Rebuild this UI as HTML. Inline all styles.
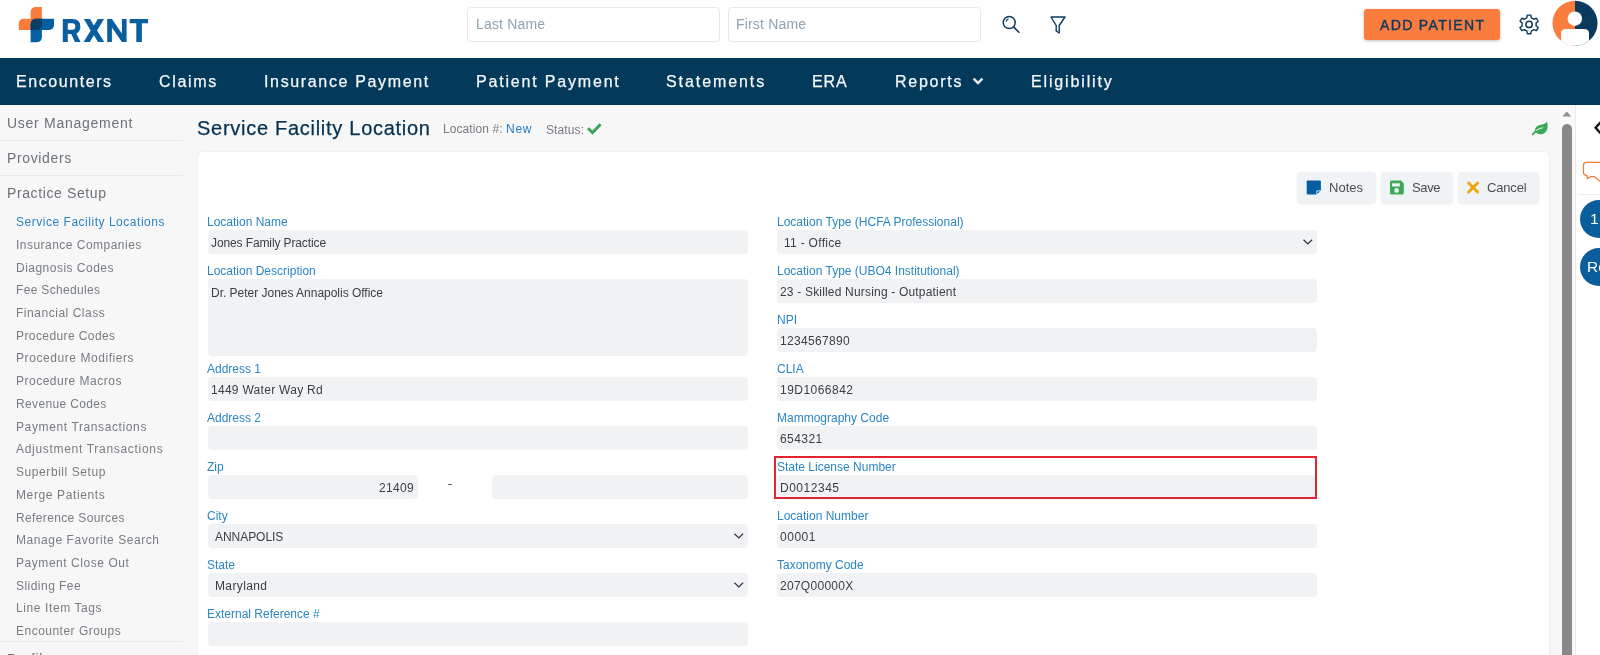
<!DOCTYPE html>
<html><head><meta charset="utf-8">
<style>
*{box-sizing:border-box;margin:0;padding:0}
html,body{width:1600px;height:655px;overflow:hidden;background:#fff;font-family:"Liberation Sans",sans-serif}
.a{position:absolute}
.t{position:absolute;white-space:nowrap;line-height:1;font-family:"Liberation Sans",sans-serif;will-change:transform}
.inp{position:absolute;background:#f1f2f4;border-radius:4px}
.chev{position:absolute}
.dash{position:absolute;width:4px;height:1px;background:#666}
.btn{position:absolute;top:172px;height:31px;background:#f0f3f5;border-radius:4px;box-shadow:0 1px 2px rgba(0,0,0,0.08)}
</style></head><body>
<!-- header -->
<div class="a" style="left:0;top:0;width:1600px;height:58px;background:#fff"></div>
<svg class="a" style="left:0;top:0" width="60" height="50" viewBox="0 0 60 50">
  <path d="M30.6 24 V12.6 Q30.6 7.1 36.1 7.1 H41.9 V24 Z" fill="#fa7b3c"/>
  <path d="M18.75 30 V24.2 Q18.75 18.75 24.2 18.75 H36 V30 Z" fill="#fa7b3c"/>
  <path d="M36 18.75 H54 V24.6 Q54 30 48.6 30 H36 Z" fill="#035f9f"/>
  <path d="M30.6 24 H41.9 V36.8 Q41.9 42.25 36.5 42.25 H30.6 Z" fill="#035f9f"/>
  <path d="M30.6 24.2 Q30.6 18.75 36.1 18.75 H41.9 V24.6 Q41.9 30 36.5 30 H30.6 Z" fill="#0a3e64"/>
</svg>
<svg class="a" style="left:60px;top:16px" width="92" height="30" viewBox="60 16 92 30">
  <g fill="#0a5f9f">
  <path fill-rule="evenodd" d="M62.8 42 V18.9 H72.6 Q80.4 18.9 80.4 26.4 Q80.4 31.6 76.3 33.4 L80.6 42 H74.9 L71.3 34.1 H67.8 V42 Z M67.8 23.3 V29.8 H72.3 Q75.3 29.8 75.3 26.55 Q75.3 23.3 72.3 23.3 Z"/>
  <path d="M83.8 18.9 H90 L93.9 25.4 L97.8 18.9 H104 L97.1 30.4 L104.2 42 H98 L93.9 35.3 L89.8 42 H83.6 L90.7 30.4 Z"/>
  <path d="M107.2 42 V18.9 H112 L121.9 33.4 V18.9 H126.6 V42 H121.9 L111.9 27.5 V42 Z"/>
  <path d="M129.7 18.9 H148.1 V23.3 H141.9 V42 H136.3 V23.3 H129.7 Z"/>
  </g>
</svg>
<div class="a" style="left:466.5px;top:7.3px;width:253px;height:34.5px;border:1px solid #e6e8ea;border-radius:4px"></div>
<div class="a" style="left:727.5px;top:7.3px;width:253px;height:34.5px;border:1px solid #e6e8ea;border-radius:4px"></div>
<svg class="a" style="left:996px;top:12px" width="30" height="26" viewBox="996 12 30 26">
  <circle cx="1009.2" cy="22.5" r="6" fill="none" stroke="#0d3a5e" stroke-width="1.5"/>
  <path d="M1013.6 26.9 L1018.9 32.2" stroke="#0d3a5e" stroke-width="1.6" stroke-linecap="round"/>
  <path d="M1006.1 21.2 Q1006.7 19.8 1008.1 19.0" stroke="#0d3a5e" stroke-width="1.2" fill="none" stroke-linecap="round"/>
</svg>
<svg class="a" style="left:1046px;top:12px" width="24" height="26" viewBox="1046 12 24 26">
  <path d="M1051 17 H1065 L1059.2 25.5 V33 L1056.2 31 V25.5 Z" fill="none" stroke="#0d3a5e" stroke-width="1.4" stroke-linejoin="round"/>
</svg>
<div class="a" style="left:1364.4px;top:9.4px;width:135.6px;height:30.4px;background:#fb7d3d;border-radius:3px;box-shadow:0 1px 3px rgba(0,0,0,0.25)"></div>
<svg class="a" style="left:1517px;top:12px" width="24" height="25" viewBox="0 0 24 25">
  <g transform="translate(12.1 12.4) scale(1.08)">
    <path d="M-1.6 -9.2 H1.6 L2.1 -6.6 Q3.3 -6.2 4.3 -5.4 L6.8 -6.3 L8.4 -3.5 L6.4 -1.8 Q6.6 -0.6 6.4 0.6 L8.4 2.3 L6.8 5.1 L4.3 4.2 Q3.3 5.0 2.1 5.4 L1.6 8.0 H-1.6 L-2.1 5.4 Q-3.3 5.0 -4.3 4.2 L-6.8 5.1 L-8.4 2.3 L-6.4 0.6 Q-6.6 -0.6 -6.4 -1.8 L-8.4 -3.5 L-6.8 -6.3 L-4.3 -5.4 Q-3.3 -6.2 -2.1 -6.6 Z" transform="translate(0 0.6)" fill="none" stroke="#0d3a5e" stroke-width="1.3" stroke-linejoin="round"/>
    <circle cx="0" cy="0" r="2.9" fill="none" stroke="#0d3a5e" stroke-width="1.4"/>
  </g>
</svg>
<svg class="a" style="left:1550px;top:0" width="50" height="50" viewBox="1550 0 50 50">
  <defs><clipPath id="av"><circle cx="1575" cy="23.2" r="22.5"/></clipPath></defs>
  <g clip-path="url(#av)">
    <rect x="1550" y="0" width="25" height="50" fill="#fb7d3d"/>
    <rect x="1575" y="0" width="25" height="50" fill="#0a3a5e"/>
    <circle cx="1574.8" cy="18.7" r="7.2" fill="#fff"/>
    <path d="M1561 50 V33.5 Q1561 29 1566 29 H1584 Q1589 29 1589 33.5 V50 Z" fill="#fff"/>
  </g>
</svg>
<!-- nav -->
<div class="a" style="left:0;top:58px;width:1600px;height:46.6px;background:#033a5b"></div>
<svg class="a" style="left:970px;top:74px" width="16" height="14" viewBox="970 74 16 14">
  <path d="M973.6 78.6 L978 83 L982.4 78.6" fill="none" stroke="#f5f7f9" stroke-width="2.3"/>
</svg>
<!-- sidebar -->
<div class="a" style="left:0;top:104.6px;width:197px;height:551px;background:#f7f7f7"></div>
<div class="a" style="left:0;top:140px;width:183px;height:1px;background:#e8e9ea"></div>
<div class="a" style="left:0;top:175px;width:183px;height:1px;background:#e8e9ea"></div>
<div class="a" style="left:0;top:641px;width:183px;height:1px;background:#e8e9ea"></div>
<!-- main -->
<div class="a" style="left:186px;top:104.6px;width:1390px;height:551px;background:#f7f7f7"></div>
<svg class="a" style="left:580px;top:120px" width="24" height="18" viewBox="580 120 24 18">
  <path d="M588 128.3 L592.5 132.6 L600.6 124.3" fill="none" stroke="#3aa655" stroke-width="2.9"/>
</svg>
<svg class="a" style="left:1530px;top:119px" width="20" height="19" viewBox="1530 119 20 19">
  <path d="M1546.8 121.9 C1548.2 124.5 1548.4 131 1543.8 133.4 C1540.8 135 1537.6 134.4 1536 132.6 C1534.4 130.6 1534.6 127.2 1538.4 125.6 C1541.6 124.2 1545.2 124.2 1546.8 121.9 Z" fill="#3aa95a"/>
  <path d="M1532.6 134.6 Q1535 131.4 1538.2 129.6" fill="none" stroke="#3aa95a" stroke-width="1.7" stroke-linecap="round"/>
  <path d="M1536.2 130.4 Q1539.4 128.2 1542.9 127.8" fill="none" stroke="#f7f7f7" stroke-width="1.1"/>
</svg>
<div class="a" style="left:197.8px;top:152.2px;width:1351.4px;height:520px;background:#fff;border-radius:5px;box-shadow:0 0 2px rgba(0,0,0,0.09)"></div>
<!-- buttons -->
<div class="btn" style="left:1297.3px;width:78.3px"></div>
<div class="btn" style="left:1380.5px;width:72.5px"></div>
<div class="btn" style="left:1458.2px;width:80.8px"></div>
<svg class="a" style="left:1305px;top:179px" width="18" height="18" viewBox="1305 179 18 18">
  <path d="M1307.7 180.6 H1319.9 Q1320.9 180.6 1320.9 181.6 V190.3 L1316.6 194.6 H1307.7 Q1306.7 194.6 1306.7 193.6 V181.6 Q1306.7 180.6 1307.7 180.6 Z" fill="#035f9f"/>
  <path d="M1316.9 194.4 V190.9 H1320.6" fill="none" stroke="#f0f3f5" stroke-width="1"/>
  <path d="M1317.7 193.6 V191.7 H1319.6 Z" fill="#035f9f"/>
</svg>
<svg class="a" style="left:1388px;top:179px" width="18" height="18" viewBox="1388 179 18 18">
  <path d="M1391.2 180.6 H1401 L1403.8 183.4 V193 Q1403.8 194.6 1402.2 194.6 H1391.6 Q1390 194.6 1390 193 V182.2 Q1390 180.6 1391.6 180.6 Z" fill="#3aa95a"/>
  <rect x="1392.1" y="183.3" width="7.7" height="3.2" fill="#f0f3f5"/>
  <circle cx="1396.6" cy="190.4" r="2.3" fill="#f0f3f5"/>
</svg>
<svg class="a" style="left:1465px;top:180px" width="16" height="16" viewBox="1465 180 16 16">
  <path d="M1468.6 183 L1477.6 192 M1477.6 183 L1468.6 192" stroke="#f0a30a" stroke-width="2.9" stroke-linecap="round"/>
</svg>
<div class="inp" style="left:207.7px;top:230px;width:540px;height:24px"></div>
<div class="inp" style="left:207.7px;top:279px;width:540px;height:77px"></div>
<div class="inp" style="left:207.7px;top:377px;width:540px;height:24px"></div>
<div class="inp" style="left:207.7px;top:426px;width:540px;height:24px"></div>
<div class="inp" style="left:207.7px;top:475px;width:210.0px;height:24px"></div>
<div class="inp" style="left:492px;top:475px;width:255.7px;height:24px"></div>
<div class="dash" style="left:448px;top:484px"></div>
<div class="inp" style="left:207.7px;top:524px;width:540px;height:24px"></div>
<svg class="chev" style="left:732.7px;top:532px" width="12" height="8" viewBox="0 0 12 8"><path d="M1.5 1.8 L5.8 6 L10.1 1.8" fill="none" stroke="#2d3446" stroke-width="1.25"/></svg>
<div class="inp" style="left:207.7px;top:573px;width:540px;height:24px"></div>
<svg class="chev" style="left:732.7px;top:581px" width="12" height="8" viewBox="0 0 12 8"><path d="M1.5 1.8 L5.8 6 L10.1 1.8" fill="none" stroke="#2d3446" stroke-width="1.25"/></svg>
<div class="inp" style="left:207.7px;top:622px;width:540px;height:24px"></div>
<div class="inp" style="left:777.0px;top:230px;width:540px;height:24px"></div>
<svg class="chev" style="left:1302.0px;top:238px" width="12" height="8" viewBox="0 0 12 8"><path d="M1.5 1.8 L5.8 6 L10.1 1.8" fill="none" stroke="#2d3446" stroke-width="1.25"/></svg>
<div class="inp" style="left:777.0px;top:279px;width:540px;height:24px"></div>
<div class="inp" style="left:777.0px;top:328px;width:540px;height:24px"></div>
<div class="inp" style="left:777.0px;top:377px;width:540px;height:24px"></div>
<div class="inp" style="left:777.0px;top:426px;width:540px;height:24px"></div>
<div class="inp" style="left:777.0px;top:475px;width:540px;height:24px"></div>
<div class="inp" style="left:777.0px;top:524px;width:540px;height:24px"></div>
<div class="inp" style="left:777.0px;top:573px;width:540px;height:24px"></div>
<!-- red highlight -->
<div class="a" style="left:774.1px;top:456px;width:542.7px;height:42.6px;border:2px solid #e02530"></div>
<!-- scrollbar -->
<div class="a" style="left:1560px;top:104.6px;width:15.5px;height:551px;background:#fafafa"></div>
<svg class="a" style="left:1560px;top:108px" width="16" height="12" viewBox="1560 108 16 12">
  <path d="M1562.3 116.4 L1566.8 111.5 L1571.3 116.4 Z" fill="#8f8f8f"/>
</svg>
<div class="a" style="left:1562px;top:124px;width:9.8px;height:540px;background:#898989;border-radius:5px"></div>
<!-- right panel -->
<div class="a" style="left:1575px;top:104.6px;width:25px;height:551px;background:#fff;border-left:1px solid #ececec"></div>
<svg class="a" style="left:1586px;top:118px" width="14" height="20" viewBox="1586 118 14 20">
  <path d="M1600.5 122.3 L1595.6 127.8 L1600.5 133.3" fill="none" stroke="#111" stroke-width="2.4"/>
</svg>
<svg class="a" style="left:1580px;top:158px" width="20" height="28" viewBox="1580 158 20 28">
  <path d="M1600 162.4 H1586.2 Q1583.5 162.4 1583.5 165.1 V172.6 Q1583.5 175.3 1586.2 175.3 H1587 L1587.4 178.6 L1590.6 176.7 H1594.5 L1600 181.2" fill="none" stroke="#f27a3a" stroke-width="1.25" stroke-linejoin="round"/>
</svg>
<div class="a" style="left:1577.7px;top:194px;width:23px;height:1px;background:#ececec"></div>
<div class="a" style="left:1579.8px;top:200px;width:38px;height:38px;border-radius:50%;background:#0b5e9c"></div>
<div class="a" style="left:1579.8px;top:248px;width:38px;height:38px;border-radius:50%;background:#0b5e9c"></div>
<span class="t" style="left:1589.5px;top:211.3px;font-size:15.5px;color:#fff">1</span>
<span class="t" style="left:1587.4px;top:258.6px;font-size:15.5px;color:#fff">Re</span>
<span class="t" id="ph1" style="top:17.15px;font-size:14px;color:#8ea3b3;letter-spacing:0.162px;left:475.90px;">Last Name</span>
<span class="t" id="ph2" style="top:17.15px;font-size:14px;color:#8ea3b3;letter-spacing:0.172px;left:736.30px;">First Name</span>
<span class="t" id="addp" style="top:17.55px;font-size:14px;color:#0d3a5e;-webkit-text-stroke:0.45px #0d3a5e;letter-spacing:1.351px;left:1379.90px;">ADD PATIENT</span>
<span class="t" id="nav0" style="top:73.66px;font-size:16px;color:#f5f7f9;-webkit-text-stroke:0.25px #f5f7f9;letter-spacing:1.572px;left:15.90px;">Encounters</span>
<span class="t" id="nav1" style="top:73.66px;font-size:16px;color:#f5f7f9;-webkit-text-stroke:0.25px #f5f7f9;letter-spacing:1.659px;left:158.70px;">Claims</span>
<span class="t" id="nav2" style="top:73.66px;font-size:16px;color:#f5f7f9;-webkit-text-stroke:0.25px #f5f7f9;letter-spacing:1.646px;left:263.60px;">Insurance Payment</span>
<span class="t" id="nav3" style="top:73.66px;font-size:16px;color:#f5f7f9;-webkit-text-stroke:0.25px #f5f7f9;letter-spacing:1.814px;left:475.50px;">Patient Payment</span>
<span class="t" id="nav4" style="top:73.66px;font-size:16px;color:#f5f7f9;-webkit-text-stroke:0.25px #f5f7f9;letter-spacing:1.918px;left:666.00px;">Statements</span>
<span class="t" id="nav5" style="top:73.66px;font-size:16px;color:#f5f7f9;-webkit-text-stroke:0.25px #f5f7f9;letter-spacing:0.894px;left:811.90px;">ERA</span>
<span class="t" id="nav6" style="top:73.66px;font-size:16px;color:#f5f7f9;-webkit-text-stroke:0.25px #f5f7f9;letter-spacing:1.744px;left:894.80px;">Reports</span>
<span class="t" id="nav7" style="top:73.66px;font-size:16px;color:#f5f7f9;-webkit-text-stroke:0.25px #f5f7f9;letter-spacing:1.855px;left:1030.50px;">Eligibility</span>
<span class="t" id="sb0" style="top:116.05px;font-size:14px;color:#6b7279;letter-spacing:0.723px;left:6.60px;">User Management</span>
<span class="t" id="sb1" style="top:151.15px;font-size:14px;color:#6b7279;letter-spacing:0.632px;left:6.60px;">Providers</span>
<span class="t" id="sb2" style="top:185.85px;font-size:14px;color:#6b7279;letter-spacing:0.611px;left:6.60px;">Practice Setup</span>
<span class="t" id="sub0" style="top:216.14px;font-size:12px;color:#2a84c4;letter-spacing:0.524px;left:16.40px;">Service Facility Locations</span>
<span class="t" id="sub1" style="top:238.86px;font-size:12px;color:#777c83;letter-spacing:0.476px;left:16.40px;">Insurance Companies</span>
<span class="t" id="sub2" style="top:261.58px;font-size:12px;color:#777c83;letter-spacing:0.484px;left:16.40px;">Diagnosis Codes</span>
<span class="t" id="sub3" style="top:284.30px;font-size:12px;color:#777c83;letter-spacing:0.337px;left:16.40px;">Fee Schedules</span>
<span class="t" id="sub4" style="top:307.02px;font-size:12px;color:#777c83;letter-spacing:0.530px;left:16.40px;">Financial Class</span>
<span class="t" id="sub5" style="top:329.74px;font-size:12px;color:#777c83;letter-spacing:0.407px;left:16.40px;">Procedure Codes</span>
<span class="t" id="sub6" style="top:352.46px;font-size:12px;color:#777c83;letter-spacing:0.568px;left:16.40px;">Procedure Modifiers</span>
<span class="t" id="sub7" style="top:375.18px;font-size:12px;color:#777c83;letter-spacing:0.490px;left:16.40px;">Procedure Macros</span>
<span class="t" id="sub8" style="top:397.90px;font-size:12px;color:#777c83;letter-spacing:0.353px;left:16.40px;">Revenue Codes</span>
<span class="t" id="sub9" style="top:420.62px;font-size:12px;color:#777c83;letter-spacing:0.614px;left:16.40px;">Payment Transactions</span>
<span class="t" id="sub10" style="top:443.34px;font-size:12px;color:#777c83;letter-spacing:0.695px;left:16.40px;">Adjustment Transactions</span>
<span class="t" id="sub11" style="top:466.06px;font-size:12px;color:#777c83;letter-spacing:0.572px;left:16.40px;">Superbill Setup</span>
<span class="t" id="sub12" style="top:488.78px;font-size:12px;color:#777c83;letter-spacing:0.622px;left:16.40px;">Merge Patients</span>
<span class="t" id="sub13" style="top:511.50px;font-size:12px;color:#777c83;letter-spacing:0.361px;left:16.40px;">Reference Sources</span>
<span class="t" id="sub14" style="top:534.22px;font-size:12px;color:#777c83;letter-spacing:0.547px;left:16.40px;">Manage Favorite Search</span>
<span class="t" id="sub15" style="top:556.94px;font-size:12px;color:#777c83;letter-spacing:0.553px;left:16.40px;">Payment Close Out</span>
<span class="t" id="sub16" style="top:579.66px;font-size:12px;color:#777c83;letter-spacing:0.465px;left:16.40px;">Sliding Fee</span>
<span class="t" id="sub17" style="top:602.38px;font-size:12px;color:#777c83;letter-spacing:0.598px;left:16.40px;">Line Item Tags</span>
<span class="t" id="sub18" style="top:625.10px;font-size:12px;color:#777c83;letter-spacing:0.487px;left:16.40px;">Encounter Groups</span>
<span class="t" id="sb3" style="top:652.25px;font-size:14px;color:#6b7279;letter-spacing:0.700px;left:6.60px;">Profile</span>
<span class="t" id="title" style="top:117.87px;font-size:20px;color:#06304f;-webkit-text-stroke:0.25px #06304f;letter-spacing:0.723px;left:197.30px;">Service Facility Location</span>
<span class="t" id="locl" style="top:123.44px;font-size:12px;color:#767b82;letter-spacing:0.079px;left:443.30px;">Location #:</span>
<span class="t" id="locn" style="top:123.44px;font-size:12px;color:#1e7bc4;letter-spacing:0.744px;left:505.60px;">New</span>
<span class="t" id="stat" style="top:123.64px;font-size:12px;color:#767b82;letter-spacing:0.107px;left:546.30px;">Status:</span>
<span class="t" id="bn" style="top:180.70px;font-size:13px;color:#4a4d52;letter-spacing:0.034px;left:1328.80px;">Notes</span>
<span class="t" id="bs" style="top:180.70px;font-size:13px;color:#4a4d52;letter-spacing:-0.349px;left:1412.00px;">Save</span>
<span class="t" id="bc" style="top:180.70px;font-size:13px;color:#4a4d52;letter-spacing:-0.176px;left:1486.70px;">Cancel</span>
<span class="t" id="lab0" style="top:215.54px;font-size:12px;color:#2b86c5;left:207.30px;">Location Name</span>
<span class="t" id="val0" style="top:237.04px;font-size:12px;color:#3a3e46;letter-spacing:-0.114px;left:210.70px;">Jones Family Practice</span>
<span class="t" id="lab1" style="top:264.54px;font-size:12px;color:#2b86c5;left:207.30px;">Location Description</span>
<span class="t" id="val1" style="top:287.34px;font-size:12px;color:#3a3e46;letter-spacing:-0.018px;left:210.70px;">Dr. Peter Jones Annapolis Office</span>
<span class="t" id="lab2" style="top:362.54px;font-size:12px;color:#2b86c5;left:207.30px;">Address 1</span>
<span class="t" id="val2" style="top:384.04px;font-size:12px;color:#3a3e46;letter-spacing:0.284px;left:210.70px;">1449 Water Way Rd</span>
<span class="t" id="lab3" style="top:411.54px;font-size:12px;color:#2b86c5;left:207.30px;">Address 2</span>
<span class="t" id="lab4" style="top:460.54px;font-size:12px;color:#2b86c5;left:207.30px;">Zip</span>
<span class="t" id="val4" style="top:482.04px;font-size:12px;color:#3a3e46;letter-spacing:0.356px;left:379.30px;">21409</span>
<span class="t" id="lab5" style="top:509.54px;font-size:12px;color:#2b86c5;left:207.30px;">City</span>
<span class="t" id="val5" style="top:531.04px;font-size:12px;color:#3a3e46;letter-spacing:-0.050px;left:214.60px;">ANNAPOLIS</span>
<span class="t" id="lab6" style="top:558.54px;font-size:12px;color:#2b86c5;left:207.30px;">State</span>
<span class="t" id="val6" style="top:580.04px;font-size:12px;color:#3a3e46;letter-spacing:0.377px;left:214.60px;">Maryland</span>
<span class="t" id="lab7" style="top:607.54px;font-size:12px;color:#2b86c5;left:207.30px;">External Reference #</span>
<span class="t" id="lab8" style="top:215.54px;font-size:12px;color:#2b86c5;left:776.60px;">Location Type (HCFA Professional)</span>
<span class="t" id="val8" style="top:237.04px;font-size:12px;color:#3a3e46;letter-spacing:0.295px;left:784.30px;">11 - Office</span>
<span class="t" id="lab9" style="top:264.54px;font-size:12px;color:#2b86c5;left:776.60px;">Location Type (UBO4 Institutional)</span>
<span class="t" id="val9" style="top:286.04px;font-size:12px;color:#3a3e46;letter-spacing:0.185px;left:780.00px;">23 - Skilled Nursing - Outpatient</span>
<span class="t" id="lab10" style="top:313.54px;font-size:12px;color:#2b86c5;left:776.60px;">NPI</span>
<span class="t" id="val10" style="top:335.04px;font-size:12px;color:#3a3e46;letter-spacing:0.316px;left:780.00px;">1234567890</span>
<span class="t" id="lab11" style="top:362.54px;font-size:12px;color:#2b86c5;left:776.60px;">CLIA</span>
<span class="t" id="val11" style="top:384.04px;font-size:12px;color:#3a3e46;letter-spacing:0.473px;left:780.00px;">19D1066842</span>
<span class="t" id="lab12" style="top:411.54px;font-size:12px;color:#2b86c5;left:776.60px;">Mammography Code</span>
<span class="t" id="val12" style="top:433.04px;font-size:12px;color:#3a3e46;letter-spacing:0.431px;left:780.00px;">654321</span>
<span class="t" id="lab13" style="top:460.54px;font-size:12px;color:#2b86c5;left:776.60px;">State License Number</span>
<span class="t" id="val13" style="top:482.04px;font-size:12px;color:#3a3e46;letter-spacing:0.516px;left:780.00px;">D0012345</span>
<span class="t" id="lab14" style="top:509.54px;font-size:12px;color:#2b86c5;left:776.60px;">Location Number</span>
<span class="t" id="val14" style="top:531.04px;font-size:12px;color:#3a3e46;letter-spacing:0.531px;left:780.00px;">00001</span>
<span class="t" id="lab15" style="top:558.54px;font-size:12px;color:#2b86c5;left:776.60px;">Taxonomy Code</span>
<span class="t" id="val15" style="top:580.04px;font-size:12px;color:#3a3e46;letter-spacing:0.284px;left:780.00px;">207Q00000X</span>
</body></html>
